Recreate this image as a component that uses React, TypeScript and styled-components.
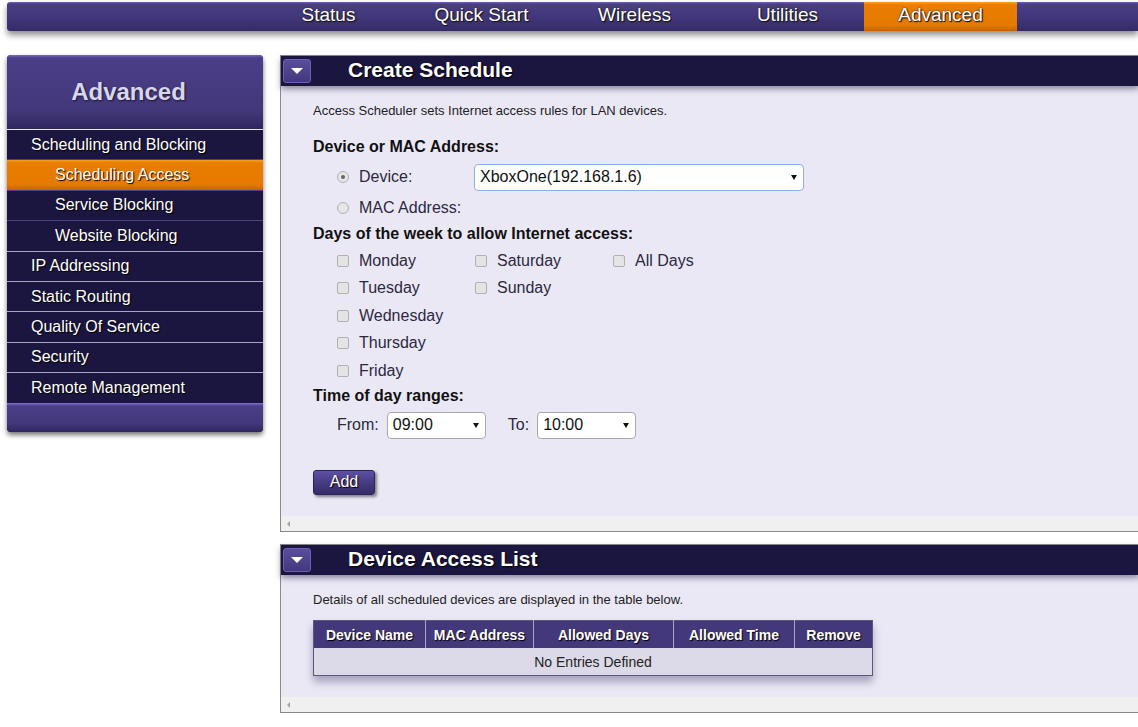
import React from 'react';
import styled, {createGlobalStyle, css} from 'styled-components';

const GlobalStyle = createGlobalStyle`
  html, body {
    margin: 0;
    padding: 0;
    background: #ffffff;
    font-family: 'Liberation Sans', Arial, sans-serif;
  }
  #root {
    width: 1138px;
    height: 727px;
    overflow: hidden;
  }
`;

const Page = styled.div`
  display: flex;
  flex-direction: column;
  padding-top: 2px;
`;

const NavBar = styled.div`
  margin-left: 7px;
  height: 29px;
  display: flex;
  padding-left: 245px;
  background: linear-gradient(#7264c0 0, #4a3f86 2px, #3f3577 60%, #352b68 100%);
  border-radius: 3px 0 0 3px;
  box-shadow: 0 4px 6px rgba(0, 0, 0, 0.45);
`;

const NavItem = styled.div<{$active?: boolean}>`
  width: 153px;
  display: flex;
  align-items: center;
  justify-content: center;
  padding-bottom: 3px;
  color: #ffffff;
  font-size: 19px;
  text-shadow: 1px 1px 1px #111, 0 0 2px #222;
  ${(p) =>
    p.$active &&
    css`
      background: linear-gradient(#f7a01e 0, #e97d00 3px, #e67a00 80%, #c86500 100%);
    `}
`;

const Content = styled.div`
  display: flex;
  align-items: flex-start;
  gap: 17px;
  margin-top: 24px;
  padding-left: 7px;
`;

const Sidebar = styled.div`
  width: 256px;
  flex: none;
  border-radius: 4px;
  overflow: hidden;
  background: #1b1640;
  box-shadow: 0 3px 5px rgba(0, 0, 0, 0.55);
`;

const SideHeader = styled.div`
  height: 74px;
  display: flex;
  align-items: center;
  justify-content: center;
  padding-right: 13px;
  background: linear-gradient(#7868c8 0, #4a3f88 3px, #433879 75%, #2f2660 100%);
  color: #d8d5ee;
  font-size: 24px;
  font-weight: bold;
  text-shadow: 1px 1px 2px #1a1530;
`;

const SideRow = styled.div<{$sub?: boolean; $active?: boolean; $line: 'light' | 'dim' | 'none'}>`
  height: 29.4px;
  display: flex;
  align-items: center;
  padding-left: ${(p) => (p.$sub ? 48 : 24)}px;
  font-size: 16px;
  color: #ffffff;
  text-shadow: 1px 1px 1px #000;
  border-top: 1px solid
    ${(p) => (p.$line === 'light' ? '#a9a4c6' : p.$line === 'dim' ? '#4c4283' : '#e9e6f5')};
  ${(p) =>
    p.$active &&
    css`
      background: linear-gradient(#f7a01e 0, #e97d00 3px, #e67a00 80%, #c86500 100%);
    `}
`;

const SideFooter = styled.div`
  height: 29px;
  background: linear-gradient(#8070d6 0, #4a3f88 3px, #433879 70%, #2f2660 100%);
`;

const Main = styled.div`
  flex: 1;
  margin-right: -2px;
  display: flex;
  flex-direction: column;
  gap: 12px;
`;

const Panel = styled.div`
  border: 1px solid #8a8a8a;
  background: #ebe8f6;
`;

const PanelHeader = styled.div`
  position: relative;
  z-index: 1;
  height: 30px;
  display: flex;
  align-items: center;
  background: #1b1640;
  box-shadow: 0 3px 6px rgba(60, 55, 80, 0.55);
`;

const Toggle = styled.div`
  width: 26px;
  height: 22px;
  margin-left: 2px;
  border-radius: 3px;
  border: 1px solid #6c5fb6;
  background: linear-gradient(#5a4d9e, #43387c);
  display: flex;
  align-items: center;
  justify-content: center;
`;

const Triangle = styled.div`
  width: 0;
  height: 0;
  border-left: 6px solid transparent;
  border-right: 6px solid transparent;
  border-top: 6px solid #ffffff;
`;

const PanelTitle = styled.div`
  margin-left: 37px;
  padding-bottom: 2px;
  color: #ffffff;
  font-size: 21px;
  font-weight: bold;
  text-shadow: 1px 1px 2px #000;
`;

const PanelBody = styled.div<{$height: number}>`
  height: ${(p) => p.$height}px;
  padding-left: 32px;
  box-sizing: border-box;
  display: flex;
  flex-direction: column;
  align-items: flex-start;
`;

const ScrollStrip = styled.div`
  height: 15px;
  background: #f0f0f0;
  display: flex;
  align-items: center;
  padding-left: 6px;
`;

const ScrollArrow = styled.div`
  width: 0;
  height: 0;
  border-top: 3px solid transparent;
  border-bottom: 3px solid transparent;
  border-right: 3px solid #a3a3a3;
`;

const Desc = styled.div<{$top: number}>`
  margin-top: ${(p) => p.$top}px;
  font-size: 13px;
  line-height: 16px;
  color: #222;
`;

const Heading = styled.div<{$top: number}>`
  margin-top: ${(p) => p.$top}px;
  font-size: 16px;
  line-height: 20px;
  font-weight: bold;
  color: #111;
`;

const OptionRow = styled.div<{$height: number; $top?: number}>`
  margin-top: ${(p) => p.$top ?? 0}px;
  height: ${(p) => p.$height}px;
  display: flex;
  align-items: center;
  padding-left: 24px;
  font-size: 16px;
  color: #2b2840;
`;

const Radio = styled.span<{$checked?: boolean}>`
  width: 10px;
  height: 10px;
  border-radius: 50%;
  border: 1px solid #b0b0b0;
  background: #e6e6e6;
  margin-right: 10px;
  display: flex;
  align-items: center;
  justify-content: center;
  &::after {
    content: '';
    display: ${(p) => (p.$checked ? 'block' : 'none')};
    width: 4px;
    height: 4px;
    border-radius: 50%;
    background: #666;
  }
`;

const Check = styled.span`
  width: 10px;
  height: 10px;
  border-radius: 2px;
  border: 1px solid #b0b0b0;
  background: #e4e4e4;
  margin-right: 10px;
  flex: none;
`;

const RadioLabel = styled.span`
  width: 115px;
`;

const Select = styled.div<{$width: number; $focus?: boolean}>`
  width: ${(p) => p.$width}px;
  height: 27px;
  box-sizing: border-box;
  border: 1px solid ${(p) => (p.$focus ? '#8fb0dc' : '#a9a9a9')};
  border-radius: 4px;
  background: #ffffff;
  display: flex;
  align-items: center;
  justify-content: space-between;
  padding: 0 6px 0 5px;
  font-size: 16px;
  color: #111;
  &::after {
    content: '';
    border-left: 3px solid transparent;
    border-right: 3px solid transparent;
    border-top: 5px solid #111;
  }
`;

const DaysGrid = styled.div`
  margin-top: 3px;
  display: flex;
`;

const DayColumn = styled.div`
  width: 138px;
  display: flex;
  flex-direction: column;
  &:first-child {
    padding-left: 24px;
  }
`;

const DayItem = styled.div`
  height: 27.5px;
  display: flex;
  align-items: center;
  font-size: 16px;
  color: #2b2840;
`;

const TimeRow = styled.div`
  margin-top: 6px;
  display: flex;
  align-items: center;
  padding-left: 24px;
  font-size: 16px;
  color: #2b2840;
`;

const TimeLabel = styled.span<{$gap: number; $lead?: number}>`
  margin-left: ${(p) => p.$lead ?? 0}px;
  margin-right: ${(p) => p.$gap}px;
`;

const AddButton = styled.div`
  margin-top: 31px;
  width: 62px;
  height: 25px;
  box-sizing: border-box;
  border-radius: 3px;
  border: 1px solid #2c2358;
  background: linear-gradient(#5d50a6, #43387c 60%, #362c69);
  color: #ffffff;
  font-size: 16px;
  display: flex;
  align-items: center;
  justify-content: center;
  text-shadow: 1px 1px 1px #000;
  box-shadow: 2px 2px 3px rgba(0, 0, 0, 0.45);
`;

const Table = styled.table`
  margin-top: 12px;
  table-layout: fixed;
  border-collapse: collapse;
  border: 1px solid #5e5680;
  box-shadow: 0 6px 8px rgba(40, 35, 70, 0.35);
  font-size: 14px;
`;

const Th = styled.th<{$width: number}>`
  width: ${(p) => p.$width}px;
  height: 27px;
  padding: 0;
  background: #433879;
  color: #ffffff;
  font-weight: bold;
  text-align: center;
  white-space: nowrap;
  border-left: 1px solid #a9a4c6;
  text-shadow: 1px 1px 1px #000;
  &:first-child {
    border-left: none;
  }
`;

const Td = styled.td`
  height: 27px;
  padding: 0;
  background: #dcdae8;
  color: #222;
  text-align: center;
`;

const navItems = ['Status', 'Quick Start', 'Wireless', 'Utilities', 'Advanced'];

const sideItems: {label: string; sub?: boolean; active?: boolean; line: 'light' | 'dim' | 'none'}[] = [
  {label: 'Scheduling and Blocking', line: 'none'},
  {label: 'Scheduling Access', sub: true, active: true, line: 'dim'},
  {label: 'Service Blocking', sub: true, line: 'dim'},
  {label: 'Website Blocking', sub: true, line: 'dim'},
  {label: 'IP Addressing', line: 'light'},
  {label: 'Static Routing', line: 'light'},
  {label: 'Quality Of Service', line: 'light'},
  {label: 'Security', line: 'light'},
  {label: 'Remote Management', line: 'light'},
];

const dayColumns = [
  ['Monday', 'Tuesday', 'Wednesday', 'Thursday', 'Friday'],
  ['Saturday', 'Sunday'],
  ['All Days'],
];

const tableColumns = [
  {label: 'Device Name', width: 111},
  {label: 'MAC Address', width: 107},
  {label: 'Allowed Days', width: 139},
  {label: 'Allowed Time', width: 120},
  {label: 'Remove', width: 77},
];

const PanelTop = ({title}: {title: string}) => (
  <PanelHeader>
    <Toggle>
      <Triangle />
    </Toggle>
    <PanelTitle>{title}</PanelTitle>
  </PanelHeader>
);

const App = () => {
  return (
    <>
      <GlobalStyle />
      <Page>
        <NavBar>
          {navItems.map((item) => (
            <NavItem key={item} $active={item === 'Advanced'}>
              {item}
            </NavItem>
          ))}
        </NavBar>
        <Content>
          <Sidebar>
            <SideHeader>Advanced</SideHeader>
            {sideItems.map((item) => (
              <SideRow key={item.label} $sub={item.sub} $active={item.active} $line={item.line}>
                {item.label}
              </SideRow>
            ))}
            <SideFooter />
          </Sidebar>
          <Main>
            <Panel>
              <PanelTop title='Create Schedule' />
              <PanelBody $height={430}>
                <Desc $top={17}>Access Scheduler sets Internet access rules for LAN devices.</Desc>
                <Heading $top={18}>Device or MAC Address:</Heading>
                <OptionRow $height={36} $top={2}>
                  <Radio $checked />
                  <RadioLabel>Device:</RadioLabel>
                  <Select $width={330} $focus>
                    XboxOne(192.168.1.6)
                  </Select>
                </OptionRow>
                <OptionRow $height={26}>
                  <Radio />
                  <RadioLabel>MAC Address:</RadioLabel>
                </OptionRow>
                <Heading $top={3}>Days of the week to allow Internet access:</Heading>
                <DaysGrid>
                  {dayColumns.map((col, i) => (
                    <DayColumn key={i}>
                      {col.map((day) => (
                        <DayItem key={day}>
                          <Check />
                          {day}
                        </DayItem>
                      ))}
                    </DayColumn>
                  ))}
                </DaysGrid>
                <Heading $top={1}>Time of day ranges:</Heading>
                <TimeRow>
                  <TimeLabel $gap={8}>From:</TimeLabel>
                  <Select $width={99}>09:00</Select>
                  <TimeLabel $gap={8} $lead={22}>
                    To:
                  </TimeLabel>
                  <Select $width={99}>10:00</Select>
                </TimeRow>
                <AddButton>Add</AddButton>
              </PanelBody>
              <ScrollStrip>
                <ScrollArrow />
              </ScrollStrip>
            </Panel>
            <Panel>
              <PanelTop title='Device Access List' />
              <PanelBody $height={122}>
                <Desc $top={17}>Details of all scheduled devices are displayed in the table below.</Desc>
                <Table>
                  <thead>
                    <tr>
                      {tableColumns.map((c) => (
                        <Th key={c.label} $width={c.width}>
                          {c.label}
                        </Th>
                      ))}
                    </tr>
                  </thead>
                  <tbody>
                    <tr>
                      <Td colSpan={5}>No Entries Defined</Td>
                    </tr>
                  </tbody>
                </Table>
              </PanelBody>
              <ScrollStrip>
                <ScrollArrow />
              </ScrollStrip>
            </Panel>
          </Main>
        </Content>
      </Page>
    </>
  );
};

export default App;
